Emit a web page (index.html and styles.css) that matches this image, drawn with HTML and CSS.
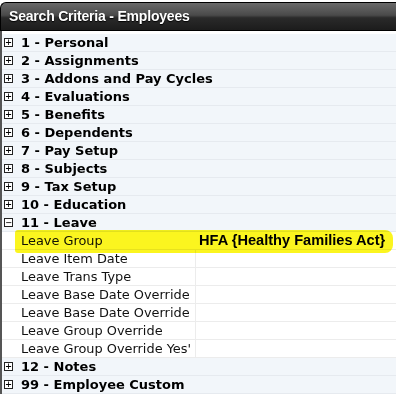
FILE: index.html
```html
<!DOCTYPE html>
<html lang="en">
  <head>
    <meta charset="UTF-8" />
    <meta name="viewport" content="width=device-width, initial-scale=1.0" />
    <title>Search Criteria - Employees</title>
    <link rel="stylesheet" href="styles.css">
  </head>
  <body>
    <div class="panel">
      <div class="panel__title">Search Criteria - Employees</div>
      <div class="tree">
        <div class="group"><span class="toggle">+</span>1 - Personal</div>
        <div class="group"><span class="toggle">+</span>2 - Assignments</div>
        <div class="group"><span class="toggle">+</span>3 - Addons and Pay Cycles</div>
        <div class="group"><span class="toggle">+</span>4 - Evaluations</div>
        <div class="group"><span class="toggle">+</span>5 - Benefits</div>
        <div class="group"><span class="toggle">+</span>6 - Dependents</div>
        <div class="group"><span class="toggle">+</span>7 - Pay Setup</div>
        <div class="group"><span class="toggle">+</span>8 - Subjects</div>
        <div class="group"><span class="toggle">+</span>9 - Tax Setup</div>
        <div class="group"><span class="toggle">+</span>10 - Education</div>
        <div class="group"><span class="toggle">&minus;</span>11 - Leave</div>

        <div class="field field--marked">
          <span class="marker"></span>
          <span class="field__name">Leave Group</span>
          <span class="field__value">HFA {Healthy Families Act}</span>
        </div>
        <div class="field">
          <span class="field__name">Leave Item Date</span>
          <span class="field__value"></span>
        </div>
        <div class="field">
          <span class="field__name">Leave Trans Type</span>
          <span class="field__value"></span>
        </div>
        <div class="field">
          <span class="field__name">Leave Base Date Override</span>
          <span class="field__value"></span>
        </div>
        <div class="field">
          <span class="field__name">Leave Base Date Override '</span>
          <span class="field__value"></span>
        </div>
        <div class="field">
          <span class="field__name">Leave Group Override</span>
          <span class="field__value"></span>
        </div>
        <div class="field">
          <span class="field__name">Leave Group Override Yes'</span>
          <span class="field__value"></span>
        </div>

        <div class="group"><span class="toggle">+</span>12 - Notes</div>
        <div class="group"><span class="toggle">+</span>99 - Employee Custom</div>
      </div>
    </div>
  </body>
</html>
```

FILE: styles.css
```css
body {
  margin: 0;
  background: #fff;
  font-family: Tahoma, "DejaVu Sans", sans-serif;
  overflow: hidden;
}

.panel {
  padding-top: 2px;
}

/* Title bar */
.panel__title {
  height: 27px;
  line-height: 27px;
  padding-left: 8px;
  border: 1px solid #000;
  border-right: none;
  border-top-left-radius: 6px;
  background: linear-gradient(#6a6a6a, #4a4a4a 45%, #2a2a2a 55%, #1c1c1c);
  color: #fff;
  font-family: "Liberation Sans", Arial, sans-serif;
  font-weight: bold;
  font-size: 14px;
  letter-spacing: -0.2px;
  text-shadow: 0 1px 1px #000;
}

.tree {
  border-left: 2px solid #555;
  padding-top: 3px;
}

/* Category rows */
.group {
  position: relative;
  z-index: 1;
  display: flex;
  align-items: center;
  height: 17px;
  border-bottom: 1px solid #e6eaef;
  background: #f2f6fa;
  font-family: "DejaVu Sans", sans-serif;
  font-weight: bold;
  font-size: 13px;
  color: #000;
}

.toggle {
  display: inline-flex;
  align-items: center;
  justify-content: center;
  box-sizing: border-box;
  width: 9px;
  height: 9px;
  margin: 0 8px 0 2px;
  border: 1px solid #222;
  background: #fff;
  font-size: 10px;
  line-height: 1;
  font-weight: normal;
  font-family: "DejaVu Sans Mono", monospace;
}

/* Field rows */
.field {
  position: relative;
  display: flex;
  height: 17px;
  border-bottom: 1px solid #ececec;
  background: #fff;
  font-family: "DejaVu Sans", sans-serif;
  font-size: 12.9px;
  line-height: 17px;
}

.field__name {
  width: 174px;
  padding-left: 19px;
  white-space: nowrap;
  overflow: hidden;
  border-right: 1px solid #ececec;
  color: #111;
}

.field--marked .field__name {
  border-right-color: transparent;
}

.field__value {
  flex: 1;
  padding-left: 3px;
  font-family: "Liberation Sans", Arial, sans-serif;
  font-weight: bold;
  font-size: 14.6px;
}

.field__name,
.field__value {
  position: relative;
  z-index: 1;
}

/* Yellow marker stroke over the selected row */
.marker {
  position: absolute;
  z-index: 2;
  left: 13px;
  top: -2px;
  width: 378px;
  height: 23px;
  background: #fbf51f;
  border-radius: 3px 8px 8px 3px;
  filter: blur(0.6px);
  mix-blend-mode: multiply;
}
```
